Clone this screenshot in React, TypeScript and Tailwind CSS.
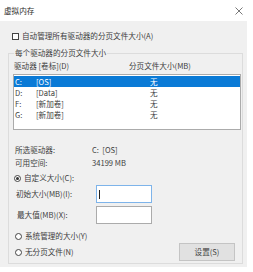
export default function App() {
  const drives = [
    { d: "C:", label: "[OS]", size: "无", selected: true },
    { d: "D:", label: "[Data]", size: "无", selected: false },
    { d: "F:", label: "[新加卷]", size: "无", selected: false },
    { d: "G:", label: "[新加卷]", size: "无", selected: false },
  ];

  return (
    <div
      className="w-[253px] h-[272px] bg-white text-[7.6px] leading-none text-[#3d3d3d] overflow-hidden"
      style={{ fontFamily: '"Noto Sans CJK SC", "Noto Sans", sans-serif' }}
    >
      {/* Title bar */}
      <div className="h-[21px] flex items-center justify-between pl-[4px] pr-[10px]">
        <span className="text-[#2a2a2a]">虚拟内存</span>
        <svg width="8" height="8" viewBox="0 0 8 8" className="text-[#555]">
          <path d="M0.5 0.5 L7.5 7.5 M7.5 0.5 L0.5 7.5" stroke="currentColor" strokeWidth="0.8" />
        </svg>
      </div>

      {/* Body */}
      <div className="w-[247px] h-[246px] bg-[#f0f0f0] pt-[11px]">
        <div className="flex items-center h-[8px] pl-[12px] gap-[3px]">
          <div className="w-[7px] h-[7px] border border-[#444] bg-white" />
          <span>自动管理所有驱动器的分页文件大小(A)</span>
        </div>

        {/* Group box */}
        <div className="relative ml-[8px] mt-[13px] w-[235px] h-[211px] border border-[#dcdcdc] pl-[4px] pr-[2px]">
          <span className="absolute left-[5px] top-[-5px] bg-[#f0f0f0] px-[1px]">每个驱动器的分页文件大小</span>

          <div className="flex items-center h-[10px] mt-[7px] pl-[1px]">
            <span className="w-[115px]">驱动器 [卷标](D)</span>
            <span>分页文件大小(MB)</span>
          </div>

          <div className="mt-[3px] w-[228px] h-[56px] border border-[#ababab] bg-white py-[1px]">
            {drives.map((r) => (
              <div
                key={r.d}
                className={
                  r.selected
                    ? "flex items-center h-[11px] bg-[#0a7ad6] text-white pl-[1px]"
                    : "flex items-center h-[11px] pl-[1px]"
                }
              >
                <span className="w-[21px]">{r.d}</span>
                <span className="w-[114px]">{r.label}</span>
                <span>{r.size}</span>
              </div>
            ))}
          </div>

          <div className="flex items-center h-[10px] mt-[15px] pl-[2px]">
            <span className="w-[77px]">所选驱动器:</span>
            <span>C:&nbsp;&nbsp;[OS]</span>
          </div>
          <div className="flex items-center h-[10px] mt-[3px] pl-[2px]">
            <span className="w-[77px]">可用空间:</span>
            <span>34199 MB</span>
          </div>

          <div className="flex items-center h-[10px] mt-[5px] pl-[1px] gap-[3px]">
            <div className="w-[7px] h-[7px] rounded-full border border-[#444] bg-white flex items-center justify-center">
              <div className="w-[3px] h-[3px] rounded-full bg-[#333]" />
            </div>
            <span>自定义大小(C):</span>
          </div>

          <div className="flex items-center h-[18px] mt-[2px] pl-[3px]">
            <span className="w-[80px]">初始大小(MB)(I):</span>
            <div className="w-[56px] h-[18px] border border-[#7eb4ea] bg-white flex items-center pl-[2px]">
              <div className="w-[1px] h-[9px] bg-[#222]" />
            </div>
          </div>
          <div className="flex items-center h-[18px] mt-[3px] pl-[4px]">
            <span className="w-[79px]">最大值(MB)(X):</span>
            <div className="w-[56px] h-[18px] border border-[#ababab] bg-white" />
          </div>

          <div className="flex items-center h-[10px] mt-[7px] pl-[2px] gap-[3px]">
            <div className="w-[7px] h-[7px] rounded-full border border-[#444] bg-white" />
            <span>系统管理的大小(Y)</span>
          </div>

          <div className="flex items-center justify-between h-[18px] mt-[2px] pl-[2px] pr-[5px]">
            <div className="flex items-center gap-[3px]">
              <div className="w-[7px] h-[7px] rounded-full border border-[#444] bg-white" />
              <span>无分页文件(N)</span>
            </div>
            <button className="w-[56px] h-[18px] bg-[#e1e1e1] border border-[#c4c4c4] text-[#444]">
              设置(S)
            </button>
          </div>
        </div>
      </div>
    </div>
  );
}
